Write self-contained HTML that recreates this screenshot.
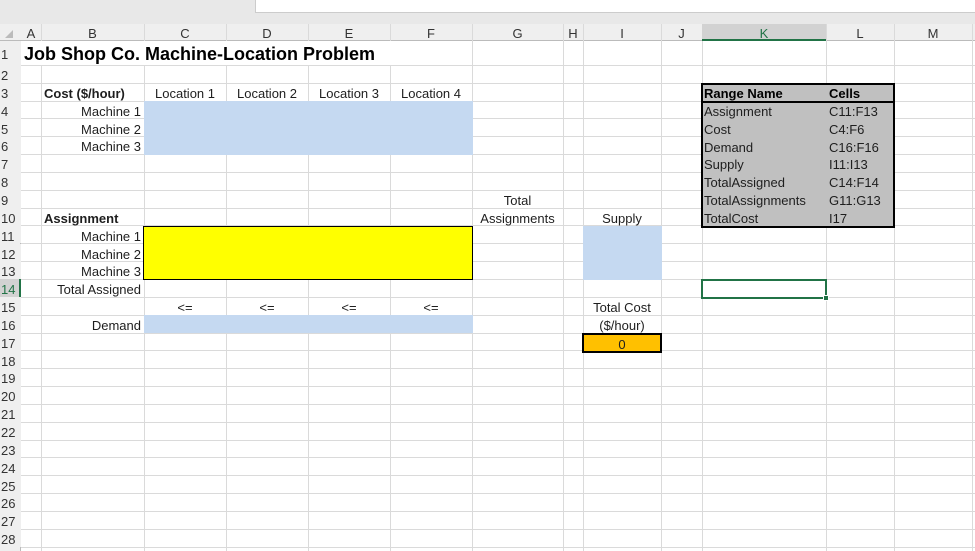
<!DOCTYPE html>
<html><head><style>
body{margin:0;width:975px;height:551px;overflow:hidden;background:#fff;font-family:"Liberation Sans",Arial,sans-serif;font-size:13px;color:#1e1e1e;position:relative}
div{position:absolute;box-sizing:border-box}
.v{top:24px;width:1px;height:527px;background:#dadada}
.h{left:21px;width:954px;height:1px;background:#dadada}
.t{height:17.85px;line-height:22px;white-space:nowrap}
.ch{top:24px;height:17px;line-height:19px;text-align:center;font-size:13px;color:#333}
.rh{left:0;width:21px;height:17.85px;line-height:22px;font-size:13px;color:#333;padding-left:1px;background:#efefef}
.b{font-weight:bold}
.r{text-align:right;padding-right:3px}
.c{text-align:center}
</style></head><body>
<div style="left:0;top:0;width:975px;height:24px;background:#e8e8e8"></div>
<div style="left:255px;top:0;width:720px;height:13px;background:#fff;border-left:1px solid #ccc;border-bottom:1px solid #ccc"></div>
<div style="left:0;top:24px;width:975px;height:17px;background:#efefef;border-bottom:1px solid #bbb"></div>
<div style="left:0;top:41px;width:21px;height:510px;background:#efefef;border-right:1px solid #bbb"></div>
<div class="h" style="top:65px"></div><div class="h" style="top:83px"></div><div class="h" style="top:101px"></div><div class="h" style="top:118px"></div><div class="h" style="top:136px"></div><div class="h" style="top:154px"></div><div class="h" style="top:172px"></div><div class="h" style="top:190px"></div><div class="h" style="top:208px"></div><div class="h" style="top:225px"></div><div class="h" style="top:243px"></div><div class="h" style="top:261px"></div><div class="h" style="top:279px"></div><div class="h" style="top:297px"></div><div class="h" style="top:315px"></div><div class="h" style="top:333px"></div><div class="h" style="top:350px"></div><div class="h" style="top:368px"></div><div class="h" style="top:386px"></div><div class="h" style="top:404px"></div><div class="h" style="top:422px"></div><div class="h" style="top:440px"></div><div class="h" style="top:457px"></div><div class="h" style="top:475px"></div><div class="h" style="top:493px"></div><div class="h" style="top:511px"></div><div class="h" style="top:529px"></div><div class="h" style="top:547px"></div>
<div class="v" style="left:41px"></div><div class="v" style="left:144px"></div><div class="v" style="left:226px"></div><div class="v" style="left:308px"></div><div class="v" style="left:390px"></div><div class="v" style="left:472px"></div><div class="v" style="left:563px"></div><div class="v" style="left:583px"></div><div class="v" style="left:661px"></div><div class="v" style="left:702px"></div><div class="v" style="left:826px"></div><div class="v" style="left:894px"></div><div class="v" style="left:972px"></div>
<div style="left:5px;top:30px;width:0;height:0;border-left:8px solid transparent;border-bottom:8px solid #bbb"></div>
<div class="ch" style="left:21px;width:20px">A</div><div class="ch" style="left:41px;width:103px">B</div><div class="ch" style="left:144px;width:82px">C</div><div class="ch" style="left:226px;width:82px">D</div><div class="ch" style="left:308px;width:82px">E</div><div class="ch" style="left:390px;width:82px">F</div><div class="ch" style="left:472px;width:91px">G</div><div class="ch" style="left:563px;width:20px">H</div><div class="ch" style="left:583px;width:78px">I</div><div class="ch" style="left:661px;width:41px">J</div>
<div class="ch" style="left:702px;width:124px;background:#d2d2d2;border-bottom:2px solid #217346;color:#217346">K</div>
<div class="ch" style="left:826px;width:68px">L</div><div class="ch" style="left:894px;width:78px">M</div>
<div class="rh" style="top:41px;height:24px;line-height:28px">1</div>
<div class="rh" style="top:65px">2</div><div class="rh" style="top:82.85px">3</div><div class="rh" style="top:100.7px">4</div><div class="rh" style="top:118.55px">5</div><div class="rh" style="top:136.4px">6</div><div class="rh" style="top:154.25px">7</div><div class="rh" style="top:172.1px">8</div><div class="rh" style="top:189.95px">9</div><div class="rh" style="top:207.8px">10</div><div class="rh" style="top:225.65px">11</div><div class="rh" style="top:243.5px">12</div><div class="rh" style="top:261.35px">13</div>
<div class="rh" style="top:279.2px;background:#d2d2d2;color:#217346;border-right:2px solid #217346">14</div>
<div class="rh" style="top:297.05px">15</div><div class="rh" style="top:314.9px">16</div><div class="rh" style="top:332.75px">17</div><div class="rh" style="top:350.6px">18</div><div class="rh" style="top:368.45px">19</div><div class="rh" style="top:386.3px">20</div><div class="rh" style="top:404.15px">21</div><div class="rh" style="top:422px">22</div><div class="rh" style="top:439.85px">23</div><div class="rh" style="top:457.7px">24</div><div class="rh" style="top:475.55px">25</div><div class="rh" style="top:493.4px">26</div><div class="rh" style="top:511.25px">27</div><div class="rh" style="top:529.1px">28</div>
<div style="left:21px;top:41px;width:451px;height:24px;background:#fff"></div>
<div class="t b" style="left:24px;top:41px;height:24px;line-height:27px;font-size:18px;color:#000">Job Shop Co. Machine-Location Problem</div>
<div style="left:144px;top:101px;width:329px;height:54px;background:#c5d9f1"></div>
<div style="left:144px;top:315px;width:329px;height:18px;background:#c5d9f1"></div>
<div style="left:583px;top:226px;width:79px;height:54px;background:#c5d9f1"></div>
<div style="left:143px;top:226px;width:330px;height:54px;background:#ffff00;border:1px solid #000"></div>
<div class="t b" style="left:44px;top:82.85px">Cost ($/hour)</div>
<div class="t c" style="left:144px;top:82.85px;width:82px">Location 1</div><div class="t c" style="left:226px;top:82.85px;width:82px">Location 2</div><div class="t c" style="left:308px;top:82.85px;width:82px">Location 3</div><div class="t c" style="left:390px;top:82.85px;width:82px">Location 4</div>
<div class="t r" style="left:41px;top:100.7px;width:103px">Machine 1</div><div class="t r" style="left:41px;top:118.55px;width:103px">Machine 2</div><div class="t r" style="left:41px;top:136.4px;width:103px">Machine 3</div>
<div class="t c" style="left:472px;top:189.95px;width:91px">Total</div>
<div class="t b" style="left:44px;top:207.8px">Assignment</div>
<div class="t c" style="left:466px;top:207.8px;width:103px">Assignments</div>
<div class="t c" style="left:583px;top:207.8px;width:78px">Supply</div>
<div class="t r" style="left:41px;top:225.65px;width:103px">Machine 1</div><div class="t r" style="left:41px;top:243.5px;width:103px">Machine 2</div><div class="t r" style="left:41px;top:261.35px;width:103px">Machine 3</div>
<div class="t r" style="left:21px;top:279.2px;width:123px">Total Assigned</div>
<div class="t c" style="left:144px;top:297.05px;width:82px">&lt;=</div><div class="t c" style="left:226px;top:297.05px;width:82px">&lt;=</div><div class="t c" style="left:308px;top:297.05px;width:82px">&lt;=</div><div class="t c" style="left:390px;top:297.05px;width:82px">&lt;=</div>
<div class="t c" style="left:583px;top:297.05px;width:78px">Total Cost</div>
<div class="t r" style="left:41px;top:314.9px;width:103px">Demand</div>
<div class="t c" style="left:583px;top:314.9px;width:78px">($/hour)</div>
<div class="t c" style="left:582px;top:333px;width:80px;height:20px;line-height:19px;background:#ffc000;border:2px solid #000">0</div>
<div style="left:701px;top:83px;width:194px;height:145px;background:#c0c0c0;border:2px solid #000"></div>
<div style="left:701px;top:100.5px;width:194px;height:2px;background:#000"></div>
<div class="t b" style="left:704px;top:83px;color:#000">Range Name</div><div class="t b" style="left:829px;top:83px;color:#000">Cells</div>
<div class="t" style="left:704px;top:101px">Assignment</div><div class="t" style="left:829px;top:101px">C11:F13</div>
<div class="t" style="left:704px;top:119px">Cost</div><div class="t" style="left:829px;top:119px">C4:F6</div>
<div class="t" style="left:704px;top:136.5px">Demand</div><div class="t" style="left:829px;top:136.5px">C16:F16</div>
<div class="t" style="left:704px;top:154.3px">Supply</div><div class="t" style="left:829px;top:154.3px">I11:I13</div>
<div class="t" style="left:704px;top:172px">TotalAssigned</div><div class="t" style="left:829px;top:172px">C14:F14</div>
<div class="t" style="left:704px;top:189.8px">TotalAssignments</div><div class="t" style="left:829px;top:189.8px">G11:G13</div>
<div class="t" style="left:704px;top:207.5px">TotalCost</div><div class="t" style="left:829px;top:207.5px">I17</div>
<div style="left:701px;top:279px;width:126px;height:20px;border:2px solid #217346"></div>
<div style="left:823px;top:295px;width:6px;height:6px;background:#217346;border:1px solid #fff"></div>
</body></html>
